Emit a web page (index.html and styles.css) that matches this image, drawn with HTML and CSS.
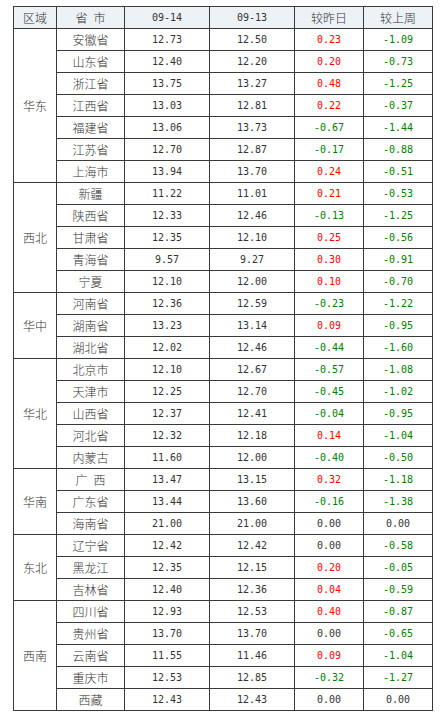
FILE: index.html
```html
<!DOCTYPE html>
<html lang="zh-CN">
<head>
<meta charset="utf-8">
<title>价格表</title>
<link rel="stylesheet" href="styles.css">
</head>
<body>
<div class="wrap">
<table class="price">
<colgroup>
<col class="c-region"><col class="c-prov"><col class="c-num"><col class="c-num"><col class="c-chg"><col class="c-chg">
</colgroup>
<thead>
<tr><th>区域</th><th>省&#8194;市</th><th class="num">09-14</th><th class="num">09-13</th><th>较昨日</th><th>较上周</th></tr>
</thead>
<tbody>
<tr><td class="region" rowspan="7">华东</td><td>安徽省</td><td class="num">12.73</td><td class="num">12.50</td><td class="num up">0.23</td><td class="num down">-1.09</td></tr>
<tr><td>山东省</td><td class="num">12.40</td><td class="num">12.20</td><td class="num up">0.20</td><td class="num down">-0.73</td></tr>
<tr><td>浙江省</td><td class="num">13.75</td><td class="num">13.27</td><td class="num up">0.48</td><td class="num down">-1.25</td></tr>
<tr><td>江西省</td><td class="num">13.03</td><td class="num">12.81</td><td class="num up">0.22</td><td class="num down">-0.37</td></tr>
<tr><td>福建省</td><td class="num">13.06</td><td class="num">13.73</td><td class="num down">-0.67</td><td class="num down">-1.44</td></tr>
<tr><td>江苏省</td><td class="num">12.70</td><td class="num">12.87</td><td class="num down">-0.17</td><td class="num down">-0.88</td></tr>
<tr><td>上海市</td><td class="num">13.94</td><td class="num">13.70</td><td class="num up">0.24</td><td class="num down">-0.51</td></tr>

<tr><td class="region" rowspan="5">西北</td><td>新疆</td><td class="num">11.22</td><td class="num">11.01</td><td class="num up">0.21</td><td class="num down">-0.53</td></tr>
<tr><td>陕西省</td><td class="num">12.33</td><td class="num">12.46</td><td class="num down">-0.13</td><td class="num down">-1.25</td></tr>
<tr><td>甘肃省</td><td class="num">12.35</td><td class="num">12.10</td><td class="num up">0.25</td><td class="num down">-0.56</td></tr>
<tr><td>青海省</td><td class="num">9.57</td><td class="num">9.27</td><td class="num up">0.30</td><td class="num down">-0.91</td></tr>
<tr><td>宁夏</td><td class="num">12.10</td><td class="num">12.00</td><td class="num up">0.10</td><td class="num down">-0.70</td></tr>

<tr><td class="region" rowspan="3">华中</td><td>河南省</td><td class="num">12.36</td><td class="num">12.59</td><td class="num down">-0.23</td><td class="num down">-1.22</td></tr>
<tr><td>湖南省</td><td class="num">13.23</td><td class="num">13.14</td><td class="num up">0.09</td><td class="num down">-0.95</td></tr>
<tr><td>湖北省</td><td class="num">12.02</td><td class="num">12.46</td><td class="num down">-0.44</td><td class="num down">-1.60</td></tr>

<tr><td class="region" rowspan="5">华北</td><td>北京市</td><td class="num">12.10</td><td class="num">12.67</td><td class="num down">-0.57</td><td class="num down">-1.08</td></tr>
<tr><td>天津市</td><td class="num">12.25</td><td class="num">12.70</td><td class="num down">-0.45</td><td class="num down">-1.02</td></tr>
<tr><td>山西省</td><td class="num">12.37</td><td class="num">12.41</td><td class="num down">-0.04</td><td class="num down">-0.95</td></tr>
<tr><td>河北省</td><td class="num">12.32</td><td class="num">12.18</td><td class="num up">0.14</td><td class="num down">-1.04</td></tr>
<tr><td>内蒙古</td><td class="num">11.60</td><td class="num">12.00</td><td class="num down">-0.40</td><td class="num down">-0.50</td></tr>

<tr><td class="region" rowspan="3">华南</td><td>广&#8194;西</td><td class="num">13.47</td><td class="num">13.15</td><td class="num up">0.32</td><td class="num down">-1.18</td></tr>
<tr><td>广东省</td><td class="num">13.44</td><td class="num">13.60</td><td class="num down">-0.16</td><td class="num down">-1.38</td></tr>
<tr><td>海南省</td><td class="num">21.00</td><td class="num">21.00</td><td class="num">0.00</td><td class="num">0.00</td></tr>

<tr><td class="region" rowspan="3">东北</td><td>辽宁省</td><td class="num">12.42</td><td class="num">12.42</td><td class="num">0.00</td><td class="num down">-0.58</td></tr>
<tr><td>黑龙江</td><td class="num">12.35</td><td class="num">12.15</td><td class="num up">0.20</td><td class="num down">-0.05</td></tr>
<tr><td>吉林省</td><td class="num">12.40</td><td class="num">12.36</td><td class="num up">0.04</td><td class="num down">-0.59</td></tr>

<tr><td class="region" rowspan="5">西南</td><td>四川省</td><td class="num">12.93</td><td class="num">12.53</td><td class="num up">0.40</td><td class="num down">-0.87</td></tr>
<tr><td>贵州省</td><td class="num">13.70</td><td class="num">13.70</td><td class="num">0.00</td><td class="num down">-0.65</td></tr>
<tr><td>云南省</td><td class="num">11.55</td><td class="num">11.46</td><td class="num up">0.09</td><td class="num down">-1.04</td></tr>
<tr><td>重庆市</td><td class="num">12.53</td><td class="num">12.85</td><td class="num down">-0.32</td><td class="num down">-1.27</td></tr>
<tr><td>西藏</td><td class="num">12.43</td><td class="num">12.43</td><td class="num">0.00</td><td class="num">0.00</td></tr>
</tbody>
</table>
</div>
</body>
</html>
```

FILE: styles.css
```css
html, body {
  margin: 0;
  padding: 0;
  background: #ffffff;
}

.wrap {
  padding: 6px 0 0 13px;
}

.price {
  border-collapse: collapse;
  table-layout: fixed;
  width: 420px;
  font-family: "Noto Sans CJK SC", "DejaVu Sans", sans-serif;
  font-size: 12px;
  font-weight: 300;
  color: #333333;
}

.c-region { width: 43px; }
.c-prov { width: 68px; }
.c-num { width: 85px; }
.c-chg { width: 69px; }

.price tr {
  height: 22px;
}

.price th,
.price td {
  border: 1px solid #3a3a3a;
  padding: 0;
  text-align: center;
  vertical-align: middle;
  font-weight: 300;
  line-height: 20px;
  white-space: nowrap;
  overflow: hidden;
}

.price thead th {
  background: #edf2f7;
}

.price .num {
  font-family: "DejaVu Sans Mono", "Liberation Mono", monospace;
  font-size: 10px;
}

.price .up {
  color: #ff0000;
}

.price .down {
  color: #008000;
}
```
